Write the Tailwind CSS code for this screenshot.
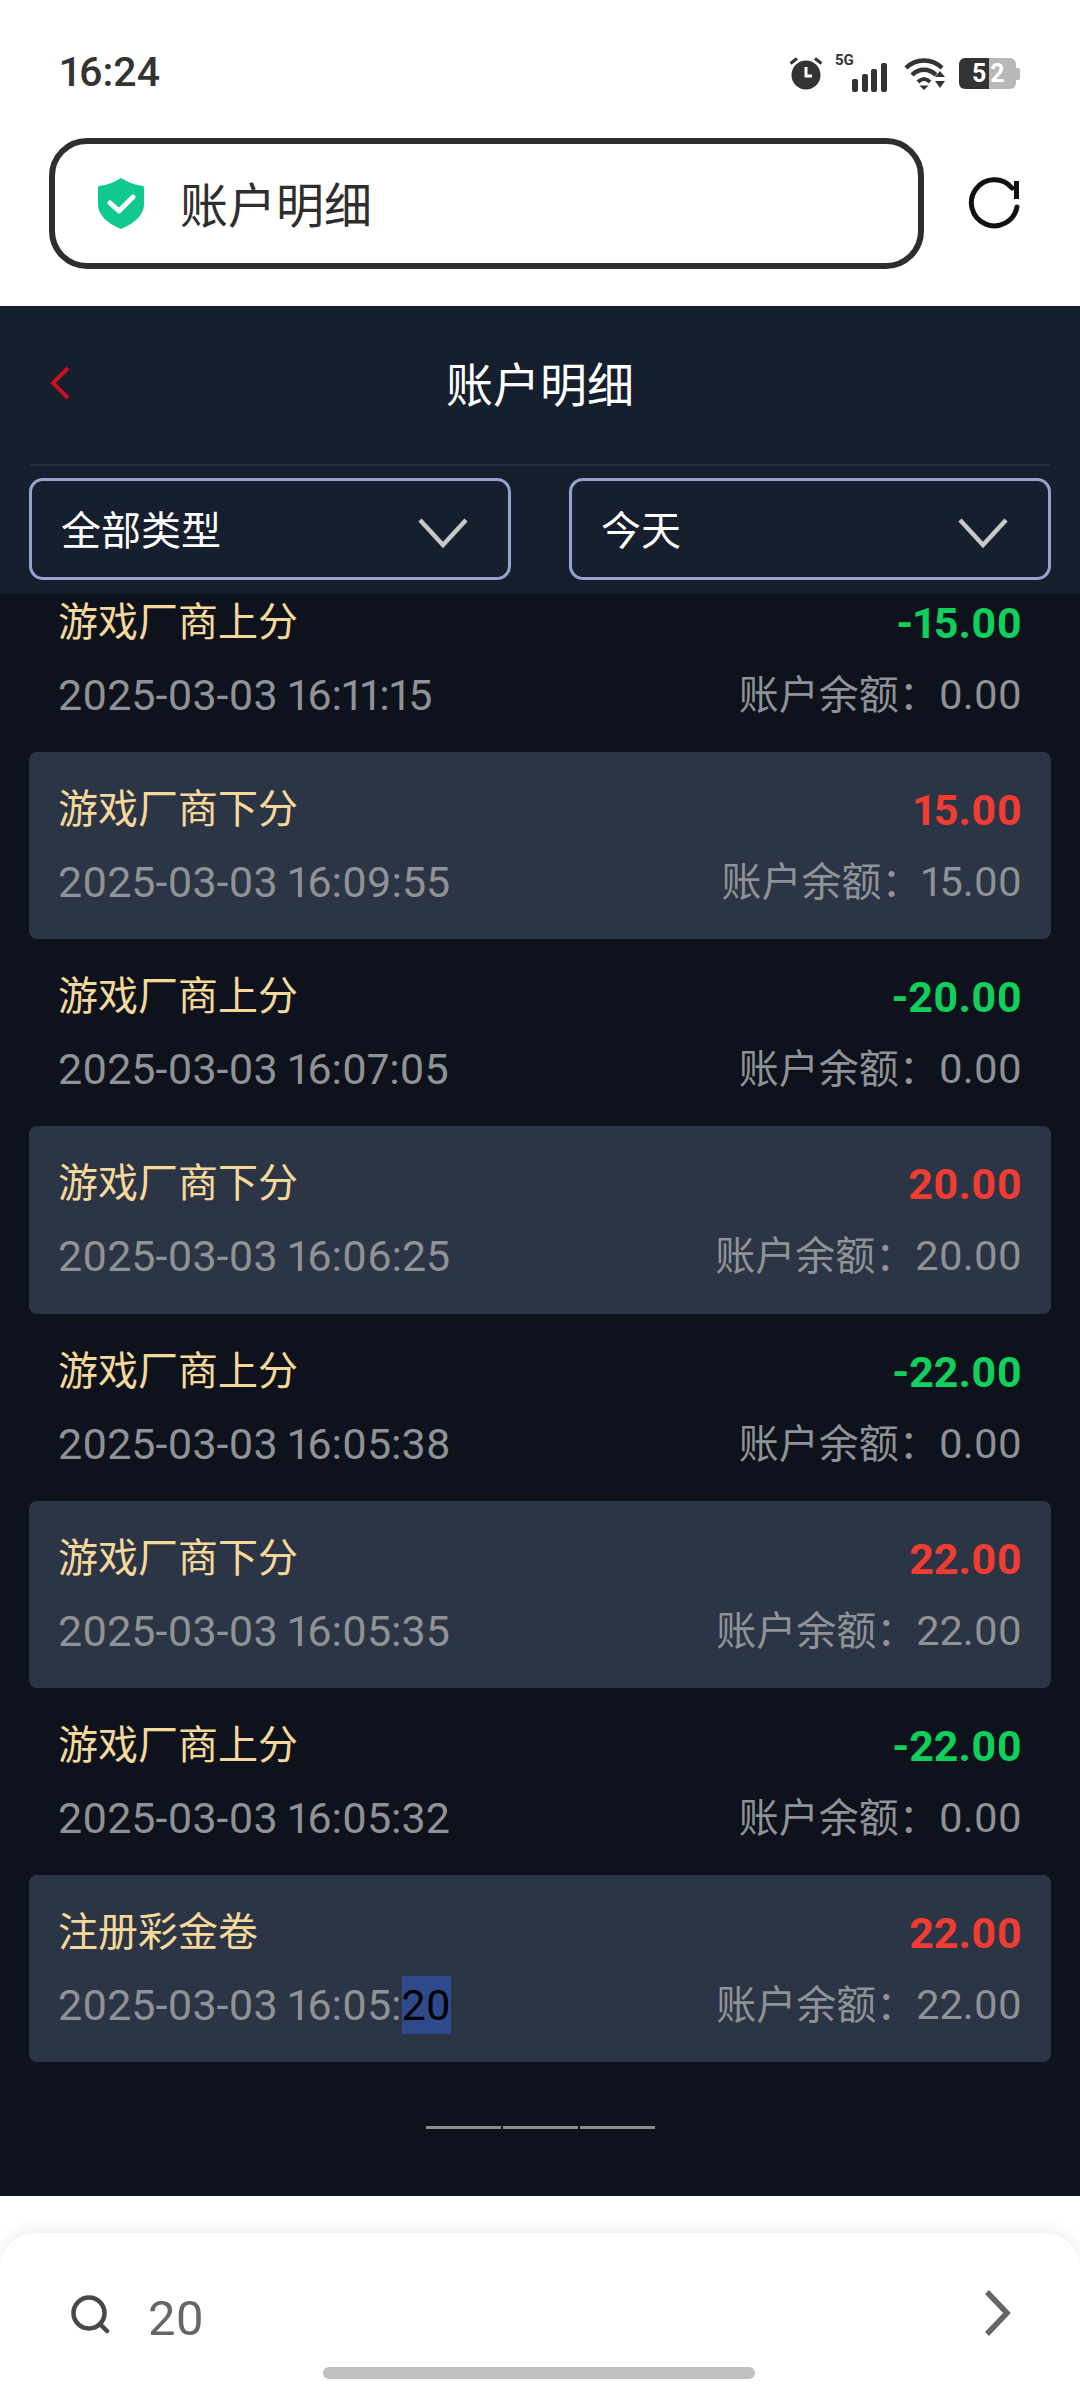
<!DOCTYPE html>
<html lang="zh-CN">

<head>
	<meta charset="UTF-8">
	<meta name="viewport" content="width=device-width, initial-scale=1.0">
	<title>账户明细</title>
	<script src="https://cdn.jsdelivr.net/npm/@tailwindcss/browser@4"></script>
</head>

<body class="bg-white">
	<div class="w-[1080px] h-[2400px] flex flex-col overflow-hidden font-['Roboto','Noto_Sans_CJK_SC',sans-serif] proportional-nums">

		<!-- browser chrome -->
		<div class="h-[306px] shrink-0 bg-white">
			<div class="h-[138px] pt-[8px] pl-[60px] pr-[60px] flex items-center justify-between text-[#333]">
				<span class="text-[41px] font-medium">16:24</span>
				<div class="flex items-center">
					<svg class="w-[34px] h-[34px]" viewBox="0 0 34 34">
						<circle cx="17" cy="19" r="14.5" fill="#333" />
						<path d="M17 11v9h6" fill="none" stroke="#fff" stroke-width="3" />
						<path d="M1.500 7.500L8 2.500M32.500 7.500L26 2.500" fill="none" stroke="#333" stroke-width="3" />
					</svg>
					<div class="relative w-[56px] h-[38px] ml-[12px]">
						<span class="absolute left-0 top-[-3px] text-[15px] leading-[18px] font-bold">5G</span>
						<div class="absolute left-[17px] bottom-0 flex items-end gap-[3.500px]">
							<div class="w-[6px] h-[13px] rounded-[2px] bg-[#333]"></div>
							<div class="w-[6px] h-[18px] rounded-[2px] bg-[#333]"></div>
							<div class="w-[6px] h-[23px] rounded-[2px] bg-[#333]"></div>
							<div class="w-[6px] h-[29px] rounded-[2px] bg-[#333]"></div>
						</div>
					</div>
					<svg class="w-[44px] h-[34px] ml-[13px]" viewBox="0 0 44 34">
						<path d="M2 12C12 2 28 2 38 12" fill="none" stroke="#333" stroke-width="4.500" />
						<path d="M8 19C15 12 25 12 32 19" fill="none" stroke="#333" stroke-width="4.500" />
						<path d="M14 26C18 22 22 22 26 26" fill="none" stroke="#333" stroke-width="4" />
						<path d="M15.500 29.500h9L20 34zM31 21h10l-5-6zM31 25h10l-5 7z" fill="#333" />
					</svg>
					<div class="relative w-[61px] h-[31px] ml-[11px] flex">
						<div class="w-[30px] h-full rounded-l-[6px] bg-[#333]"></div>
						<div class="w-[27px] h-full rounded-r-[6px] bg-[#b8b8b8]"></div>
						<div class="w-[4px] h-[12px] mt-[10px] rounded-r-[2px] bg-[#b8b8b8]"></div>
						<span class="absolute left-[13px] top-0 text-[25px] leading-[31px] font-bold tracking-[4px] text-white">52</span>
					</div>
				</div>
			</div>
			<div class="flex items-center">
				<div class="ml-[49px] w-[875px] h-[131px] border-[6px] border-[#2e2e2e] rounded-[38px] flex items-center pl-[42px]">
					<svg class="w-[48px] h-[51px]" viewBox="0 0 48 51">
						<path d="M24 0C30 4 38 7 46 8Q47 8 47 10V26C47 38 36 46 24 51C12 46 1 38 1 26V10Q1 8 2 8C10 7 18 4 24 0Z" fill="#10c98f" />
						<path d="M13 25L22 33L36 19" fill="none" stroke="#fff" stroke-width="5" stroke-linecap="round" stroke-linejoin="round" />
					</svg>
					<span class="ml-[35px] pt-[6px] text-[48px] text-[#2e2e2e]">账户明细</span>
				</div>
				<svg class="w-[56px] h-[56px] ml-[43px]" viewBox="0 0 56 56">
					<path d="M50 31A23 23 0 1 1 45 12" fill="none" stroke="#111" stroke-width="5" stroke-linecap="round" />
					<path d="M49.500 5V23" fill="none" stroke="#111" stroke-width="5" />
				</svg>
			</div>
		</div>

		<!-- page header -->
		<div class="h-[158px] shrink-0 bg-[#161f2d] relative flex items-center justify-center">
			<svg class="absolute left-[49px] top-[60px] w-[22px] h-[34px]" viewBox="0 0 22 34">
				<path d="M19 2L4 17L19 32" fill="none" stroke="#c8101e" stroke-width="4" />
			</svg>
			<span class="pt-[2px] text-[47px] text-white">账户明细</span>
		</div>
		<div class="shrink-0 bg-[#161f2d] px-[30px]">
			<div class="h-[2px] bg-[#273042]"></div>
		</div>

		<!-- filters -->
		<div class="h-[128px] shrink-0 bg-[#161f2d] px-[29px] pt-[12px] flex gap-[58px]">
			<div class="w-[482px] h-[102px] border-[3px] border-[#93a5cc] rounded-[14px] flex items-center justify-between pl-[29px] pr-[39px] text-[40px] text-white">
				<span class="pt-[5px]">全部类型</span>
				<svg class="w-[52px] h-[32px] mt-[7px]" viewBox="0 0 52 32">
					<path d="M3 3L26 28L49 3" fill="none" stroke="#c8c8c8" stroke-width="4.500" />
				</svg>
			</div>
			<div class="w-[482px] h-[102px] border-[3px] border-[#93a5cc] rounded-[14px] flex items-center justify-between pl-[29px] pr-[39px] text-[40px] text-white">
				<span class="pt-[5px]">今天</span>
				<svg class="w-[52px] h-[32px] mt-[7px]" viewBox="0 0 52 32">
					<path d="M3 3L26 28L49 3" fill="none" stroke="#c8c8c8" stroke-width="4.500" />
				</svg>
			</div>
		</div>

		<!-- records -->
		<div class="h-[1602px] shrink-0 bg-[#0d121c] overflow-hidden px-[29px]">
			<div class="-mt-[29px] flex flex-col text-[43px] leading-[50px]">

				<div class="h-[187.150px] rounded-[8px] px-[29px] pt-[33px]">
					<div class="flex justify-between"><span class="text-[40px] text-[#f5d99b]">游戏厂商上分</span><span class="text-[43px] font-bold text-[#10cf5c]">-15.00</span></div>
					<div class="mt-[22px] h-[50px] flex justify-between text-[#8f9296]"><span>2025-03-03 16:11:15</span><span class="text-[41.500px]"><span class="text-[40px]">账户余额：</span>0.00</span></div>
				</div>

				<div class="h-[187.150px] rounded-[8px] px-[29px] pt-[33px] bg-[#2c3545]">
					<div class="flex justify-between"><span class="text-[40px] text-[#f5d99b]">游戏厂商下分</span><span class="text-[43px] font-bold text-[#f03c32]">15.00</span></div>
					<div class="mt-[22px] h-[50px] flex justify-between text-[#8f9296]"><span>2025-03-03 16:09:55</span><span class="text-[41.500px]"><span class="text-[40px]">账户余额：</span>15.00</span></div>
				</div>

				<div class="h-[187.150px] rounded-[8px] px-[29px] pt-[33px]">
					<div class="flex justify-between"><span class="text-[40px] text-[#f5d99b]">游戏厂商上分</span><span class="text-[43px] font-bold text-[#10cf5c]">-20.00</span></div>
					<div class="mt-[22px] h-[50px] flex justify-between text-[#8f9296]"><span>2025-03-03 16:07:05</span><span class="text-[41.500px]"><span class="text-[40px]">账户余额：</span>0.00</span></div>
				</div>

				<div class="h-[187.150px] rounded-[8px] px-[29px] pt-[33px] bg-[#2c3545]">
					<div class="flex justify-between"><span class="text-[40px] text-[#f5d99b]">游戏厂商下分</span><span class="text-[43px] font-bold text-[#f03c32]">20.00</span></div>
					<div class="mt-[22px] h-[50px] flex justify-between text-[#8f9296]"><span>2025-03-03 16:06:25</span><span class="text-[41.500px]"><span class="text-[40px]">账户余额：</span>20.00</span></div>
				</div>

				<div class="h-[187.150px] rounded-[8px] px-[29px] pt-[33px]">
					<div class="flex justify-between"><span class="text-[40px] text-[#f5d99b]">游戏厂商上分</span><span class="text-[43px] font-bold text-[#10cf5c]">-22.00</span></div>
					<div class="mt-[22px] h-[50px] flex justify-between text-[#8f9296]"><span>2025-03-03 16:05:38</span><span class="text-[41.500px]"><span class="text-[40px]">账户余额：</span>0.00</span></div>
				</div>

				<div class="h-[187.150px] rounded-[8px] px-[29px] pt-[33px] bg-[#2c3545]">
					<div class="flex justify-between"><span class="text-[40px] text-[#f5d99b]">游戏厂商下分</span><span class="text-[43px] font-bold text-[#f03c32]">22.00</span></div>
					<div class="mt-[22px] h-[50px] flex justify-between text-[#8f9296]"><span>2025-03-03 16:05:35</span><span class="text-[41.500px]"><span class="text-[40px]">账户余额：</span>22.00</span></div>
				</div>

				<div class="h-[187.150px] rounded-[8px] px-[29px] pt-[33px]">
					<div class="flex justify-between"><span class="text-[40px] text-[#f5d99b]">游戏厂商上分</span><span class="text-[43px] font-bold text-[#10cf5c]">-22.00</span></div>
					<div class="mt-[22px] h-[50px] flex justify-between text-[#8f9296]"><span>2025-03-03 16:05:32</span><span class="text-[41.500px]"><span class="text-[40px]">账户余额：</span>0.00</span></div>
				</div>

				<div class="h-[187.150px] rounded-[8px] px-[29px] pt-[33px] bg-[#2c3545]">
					<div class="flex justify-between"><span class="text-[40px] text-[#f5d99b]">注册彩金卷</span><span class="text-[43px] font-bold text-[#f03c32]">22.00</span></div>
					<div class="mt-[22px] h-[50px] flex justify-between text-[#8f9296]"><span class="flex items-center"><span>2025-03-03 16:05:</span><span class="h-[58px] leading-[58px] bg-[#2f4a8a] text-black">20</span></span><span class="text-[41.500px]"><span class="text-[40px]">账户余额：</span>22.00</span></div>
				</div>

				<div class="mt-[64px] flex justify-center gap-[2px]">
					<div class="w-[75px] h-[3px] bg-[#8c8c8c]"></div>
					<div class="w-[75px] h-[3px] bg-[#8c8c8c]"></div>
					<div class="w-[75px] h-[3px] bg-[#8c8c8c]"></div>
				</div>
			</div>
		</div>

		<!-- find in page bar -->
		<div class="h-[204px] shrink-0 bg-white pt-[37px]">
			<div class="h-[167px] rounded-t-[36px] bg-white shadow-[0_-6px_14px_rgba(0,0,0,0.06)] relative">
				<div class="h-[168px] flex items-start pt-[58px] pl-[70px] pr-[68px]">
					<svg class="w-[40px] h-[42px] mt-[2px]" viewBox="0 0 40 42">
						<circle cx="19" cy="20" r="15.5" fill="none" stroke="#484848" stroke-width="4.500" />
						<path d="M30 31L37 38" fill="none" stroke="#484848" stroke-width="4.500" stroke-linecap="round" />
					</svg>
					<span class="ml-[38px] text-[49px] leading-[56px] text-[#666]">20</span>
					<svg class="ml-auto -mt-[2px] w-[30px] h-[48px]" viewBox="0 0 30 48">
						<path d="M5 3L25 24L5 45" fill="none" stroke="#666" stroke-width="5.500" />
					</svg>
				</div>
				<div class="absolute left-[323px] top-[134px] w-[432px] h-[12px] rounded-full bg-[#c0c0c0]"></div>
			</div>
		</div>
	</div>
</body>

</html>
